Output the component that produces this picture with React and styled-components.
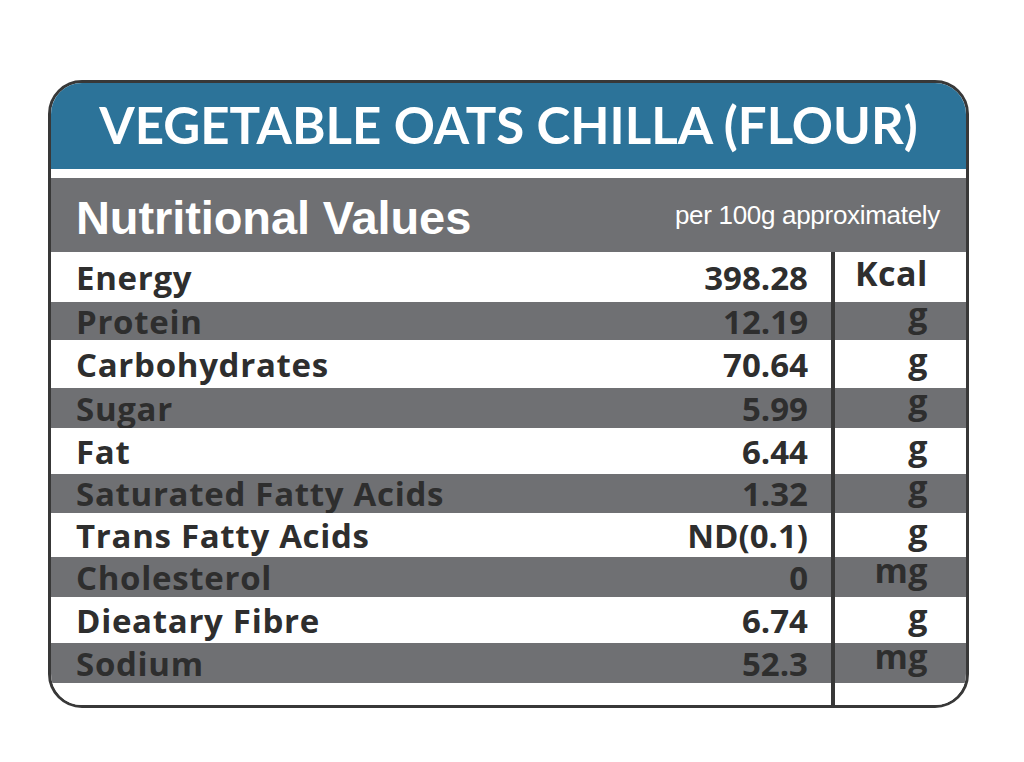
import React from "react";
import styled, { createGlobalStyle } from "styled-components";

const GlobalStyle = createGlobalStyle`
  body {
    margin: 0;
    background: #ffffff;
    font-family: Lato, "Noto Sans", sans-serif;
  }
`;

const colors = {
  blue: "#2c7399",
  gray: "#6f7073",
  ink: "#2e2e2e",
  border: "#383838",
};

const rows = [
  { name: "Energy", value: "398.28", unit: "Kcal", h: 50 },
  { name: "Protein", value: "12.19", unit: "g", h: 38, shaded: true },
  { name: "Carbohydrates", value: "70.64", unit: "g", h: 48 },
  { name: "Sugar", value: "5.99", unit: "g", h: 40, shaded: true },
  { name: "Fat", value: "6.44", unit: "g", h: 46 },
  { name: "Saturated Fatty Acids", value: "1.32", unit: "g", h: 39, shaded: true },
  { name: "Trans Fatty Acids", value: "ND(0.1)", unit: "g", h: 44 },
  { name: "Cholesterol", value: "0", unit: "mg", h: 40, shaded: true },
  { name: "Dieatary Fibre", value: "6.74", unit: "g", h: 46 },
  { name: "Sodium", value: "52.3", unit: "mg", h: 40, shaded: true },
];

const App = () => {
  return (
    <Styles.Page>
      <GlobalStyle />
      <Styles.Label>
        <Styles.Header>VEGETABLE OATS CHILLA (FLOUR)</Styles.Header>
        <Styles.SubBand>
          <Styles.SubTitle>Nutritional Values</Styles.SubTitle>
          <Styles.Per>per 100g approximately</Styles.Per>
        </Styles.SubBand>
        <Styles.Table>
          {rows.map((r) => (
            <Styles.Row key={r.name} $h={r.h} $shaded={r.shaded}>
              <Styles.Name>{r.name}</Styles.Name>
              <Styles.Value>{r.value}</Styles.Value>
              <Styles.Unit $shaded={r.shaded}>{r.unit}</Styles.Unit>
            </Styles.Row>
          ))}
          <Styles.Row $h={22}>
            <span />
            <span />
            <Styles.Unit />
          </Styles.Row>
        </Styles.Table>
      </Styles.Label>
    </Styles.Page>
  );
};

export default App;

const Styles = {
  Page: styled.div`
    padding: 80px 0 0 48px;
  `,
  Label: styled.div`
    width: 915px;
    border: 3px solid ${colors.border};
    border-radius: 34px;
    overflow: hidden;
    background: #fff;
    display: flex;
    flex-direction: column;
  `,
  Header: styled.div`
    height: 95px;
    box-sizing: border-box;
    background: ${colors.blue};
    border-bottom: 9px solid #fff;
    display: flex;
    align-items: center;
    justify-content: center;
    padding-bottom: 4px;
    color: #fff;
    font-family: Lato, sans-serif;
    font-weight: 700;
    font-size: 51px;
    line-height: 1;
  `,
  SubBand: styled.div`
    height: 74px;
    background: ${colors.gray};
    display: flex;
    align-items: center;
    justify-content: space-between;
    padding: 0 26px 0 25px;
  `,
  SubTitle: styled.div`
    font-family: "Liberation Sans", Arial, sans-serif;
    font-weight: 700;
    font-size: 47px;
    color: #fff;
    letter-spacing: -0.1px;
    padding-top: 4px;
  `,
  Per: styled.div`
    font-family: "Liberation Sans", Arial, sans-serif;
    font-size: 26px;
    color: #fff;
    letter-spacing: -0.3px;
  `,
  Table: styled.div`
    display: flex;
    flex-direction: column;
  `,
  Row: styled.div`
    height: ${({ $h }) => $h}px;
    display: grid;
    grid-template-columns: 1fr auto 135px;
    grid-template-rows: 100%;
    background: ${({ $shaded }) => ($shaded ? colors.gray : "#fff")};
    color: ${colors.ink};
    font-family: "Open Sans", sans-serif;
    font-weight: 700;
    font-size: 33px;
    line-height: 1;
  `,
  Name: styled.div`
    display: flex;
    align-items: center;
    padding-left: 25px;
    letter-spacing: 0.7px;
  `,
  Value: styled.div`
    display: flex;
    align-items: center;
    justify-content: flex-end;
    padding-right: 23px;
  `,
  Unit: styled.div`
    box-sizing: border-box;
    display: flex;
    align-items: center;
    justify-content: flex-end;
    padding-right: 38px;
    padding-bottom: ${({ $shaded }) => ($shaded ? 14 : 9)}px;
    border-left: 4px solid ${colors.border};
    font-size: 34px;
    letter-spacing: 0.5px;
  `,
};
